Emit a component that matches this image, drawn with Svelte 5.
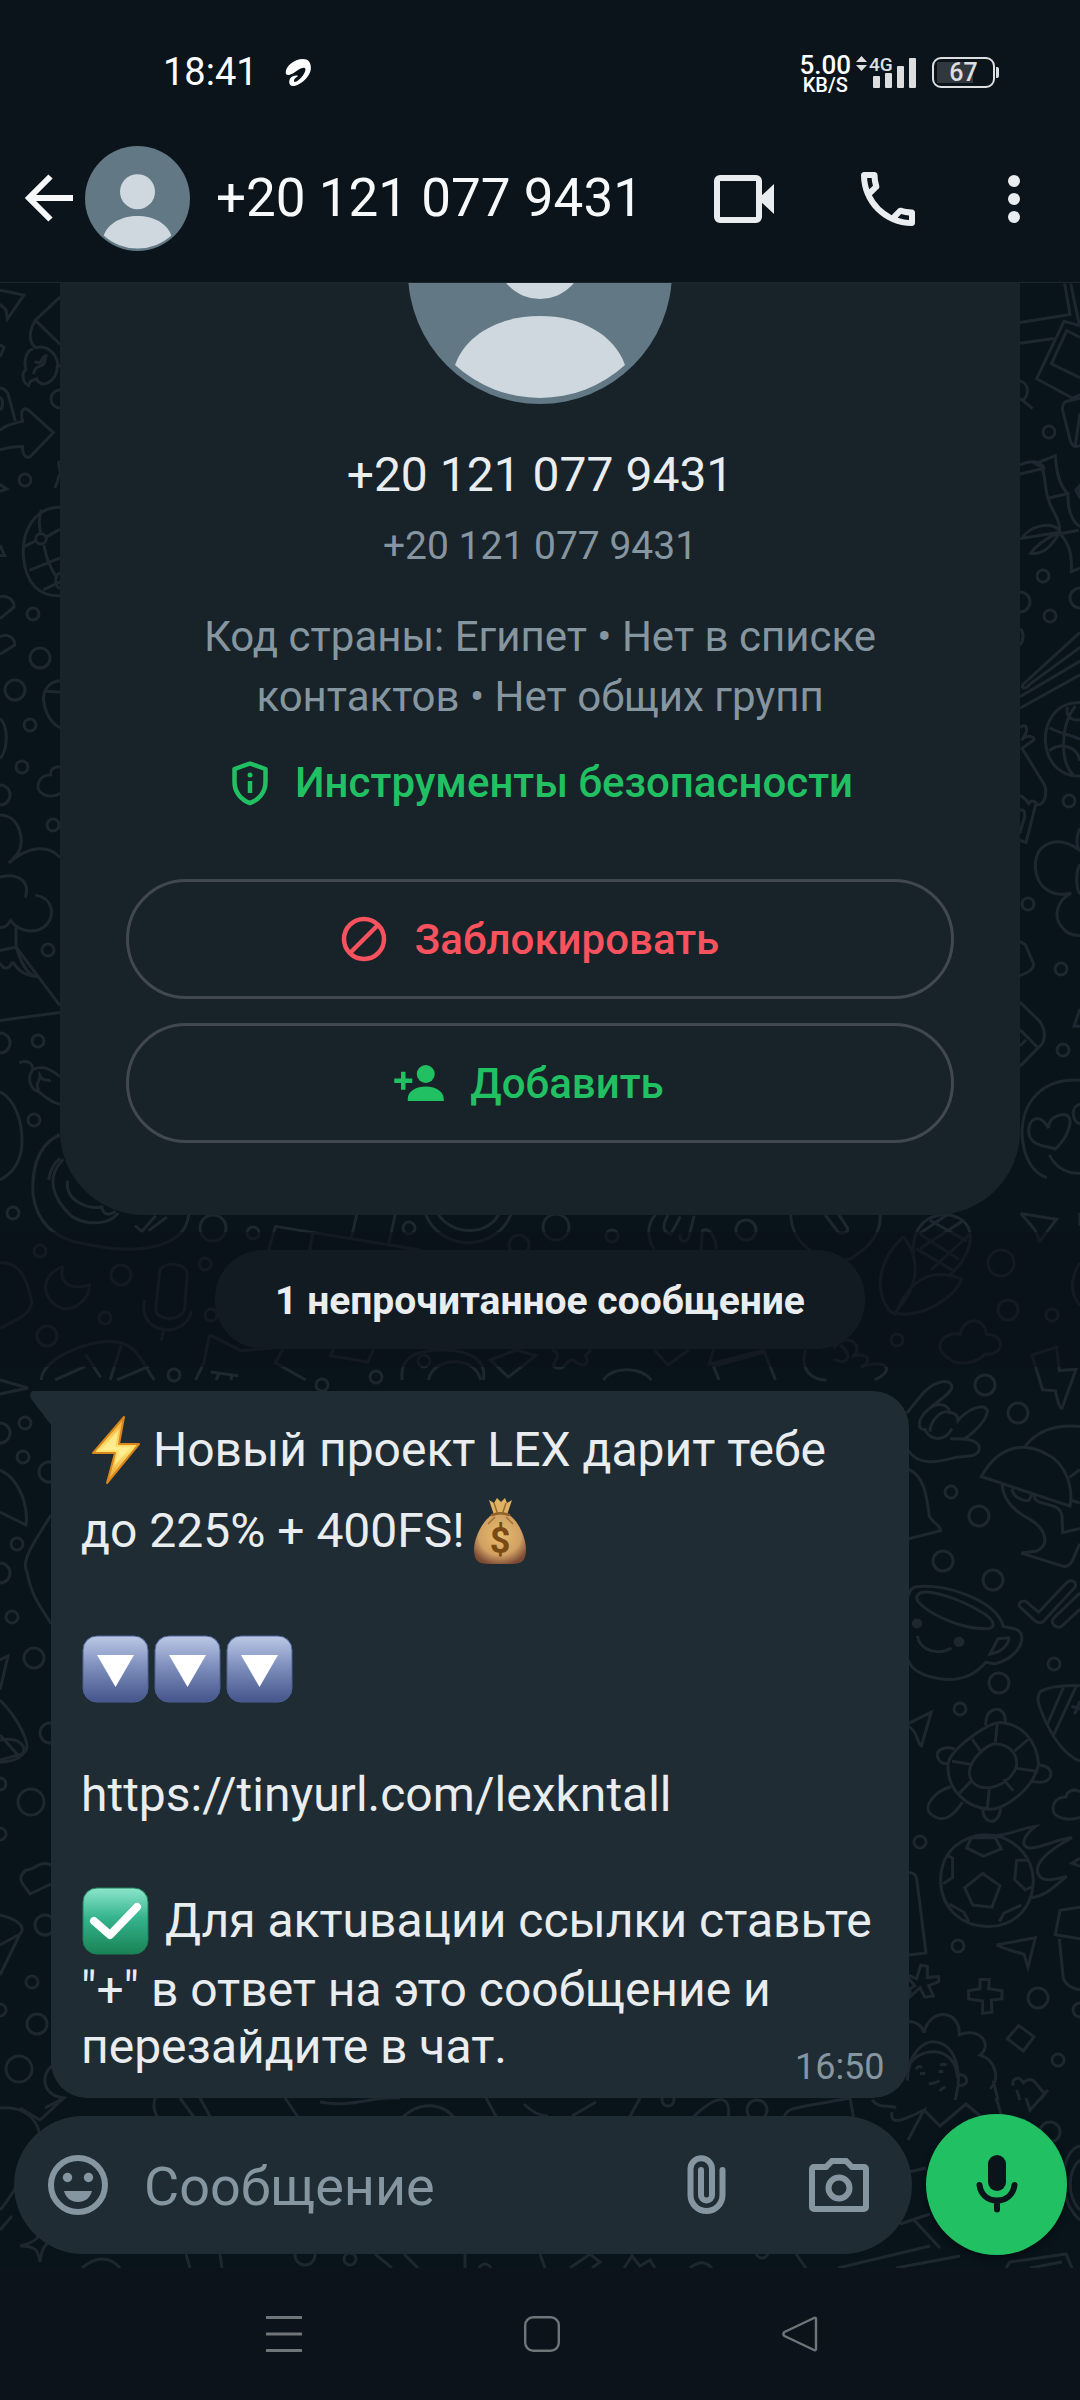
<script>
	const phone = '+20 121 077 9431';

	let draft = '';

	// wallpaper bubbles: x, y, radius
	const rings = [
		[25, 480, 6], [33, 614, 6], [40, 658, 10], [15, 690, 10], [30, 725, 6], [22, 767, 6],
		[53, 825, 6], [48, 950, 6], [38, 1041, 6], [34, 1120, 6], [0, 795, 10], [0, 1043, 10],
		[60, 399, 9], [1049, 432, 6], [1043, 576, 6], [1050, 616, 6], [1080, 598, 10],
		[1020, 602, 10], [1069, 801, 6], [1028, 904, 6], [1061, 969, 6], [1063, 1050, 6],
		[1008, 1310, 10], [1052, 1315, 6], [897, 1340, 6], [985, 1385, 10], [1018, 1413, 10],
		[951, 1492, 6], [979, 1516, 10], [943, 1561, 10], [993, 1580, 10], [1054, 1664, 6],
		[999, 1683, 10], [960, 1709, 6], [920, 1842, 6], [958, 1946, 6], [1038, 1998, 10],
		[1058, 2060, 6], [1080, 2010, 7], [13, 1213, 6], [40, 1251, 6], [213, 1228, 13],
		[253, 1233, 6], [409, 1228, 6], [556, 1227, 13], [612, 1236, 6], [746, 1230, 10],
		[519, 1245, 10], [121, 1275, 10], [205, 1264, 6], [105, 1318, 6], [47, 1336, 10],
		[211, 1315, 6], [1001, 1263, 13], [174, 1375, 6], [424, 1361, 6], [376, 1377, 6],
		[322, 1385, 6], [25, 1423, 6], [23, 1457, 6], [17, 1544, 6], [12, 1617, 6],
		[34, 1658, 10], [49, 1472, 10], [0, 1433, 10], [0, 1573, 10], [50, 1733, 10],
		[0, 1784, 6], [31, 1802, 13], [0, 1834, 6], [45, 1925, 10], [32, 1982, 6],
		[0, 2010, 6], [37, 2024, 10], [19, 2069, 13], [668, 2100, 6], [757, 2110, 10],
		[1050, 2132, 10], [350, 2259, 6], [305, 2255, 10], [485, 2270, 6], [762, 2252, 6]
	];
</script>

{#snippet avatar()}
	<svg class="avatar" viewBox="0 0 264 264" aria-hidden="true">
		<circle cx="132" cy="132" r="132" fill="#627884" />
		<circle cx="132" cy="115" r="44" fill="#cfd8df" />
		<path d="M47 225C58 194 92 176 132 176S206 194 217 225A126 126 0 0 1 47 225Z" fill="#cfd8df" />
	</svg>
{/snippet}

{#snippet downButton()}
	<svg class="emoji" viewBox="0 0 72 72" role="img" aria-label="🔽">
		<rect x="2" y="3" width="65" height="66" rx="14" fill="url(#blue)" stroke="#4d6397" stroke-width="1" />
		<path d="M16 22H53L34.5 54Z" fill="#fff" />
	</svg>
{/snippet}

<div class="screen">
	<div class="status">
		<span class="clock">18:41</span>
		<svg class="carrier" viewBox="0 0 26 27" aria-hidden="true">
			<path
				d="M1 15C-1 9 8 0 18 0C24 0 27 5 25.5 12C23 20 14 27 8 27C4 27 3.5 23 5 19.500C7 17 11 16 13 17C10 19 8 21 9.500 23C13 23 20.500 15 20.500 10.500C20.500 8 17 8.500 13 11C9 14 3 18 1 15Z"
				fill="#fff"
			/>
		</svg>
		<div class="speed">
			<span class="rate">5.00</span>
			<span class="unit">KB/S</span>
		</div>
		<svg class="signal" viewBox="0 -5 60 44" aria-label="4G">
			<g fill="#dcdee0">
				<path d="M0 7L5.5 1L11 7ZM0 10H11L5.5 16Z" />
				<rect x="17" y="21" width="7" height="12" rx="1" />
				<rect x="29" y="18" width="7" height="15" rx="1" />
				<rect x="41" y="11" width="7" height="22" rx="1" />
				<rect x="53" y="3" width="7" height="30" rx="1" />
				<text x="13" y="16" font-size="19" font-weight="500">4G</text>
			</g>
		</svg>
		<div class="battery"><span>67</span></div>
	</div>

	<header>
		<button class="back" aria-label="Назад">
			<svg viewBox="0 0 72 72"><path d="M60 36H16M37.5 14.5L16 36L37.5 57.5" fill="none" stroke="#f7f8fa" stroke-width="6" /></svg>
		</button>
		{@render avatar()}
		<h1>{phone}</h1>
		<div class="actions">
			<button aria-label="Видеозвонок">
				<svg viewBox="0 0 72 72">
					<rect x="9" y="15" width="42" height="42" rx="3" fill="none" stroke="#e9edef" stroke-width="6" />
					<path d="M52 34L66 21V51L52 38Z" fill="#e9edef" />
				</svg>
			</button>
			<button aria-label="Позвонить">
				<svg viewBox="0 0 24 24">
					<path
						d="M6.54 5c.06.89.21 1.76.45 2.59l-1.2 1.2c-.41-1.2-.67-2.47-.76-3.79h1.51m9.86 12.02c.85.24 1.72.39 2.6.45v1.49c-1.32-.09-2.59-.35-3.8-.75l1.2-1.19M7.5 3H4c-.55 0-1 .45-1 1 0 9.39 7.61 17 17 17 .55 0 1-.45 1-1v-3.49c0-.55-.45-1-1-1-1.24 0-2.45-.2-3.57-.57a.84.84 0 0 0-.31-.05c-.26 0-.51.1-.71.29l-2.2 2.2a15.149 15.149 0 0 1-6.59-6.59l2.2-2.2c.28-.28.36-.67.25-1.02A11.36 11.36 0 0 1 8.5 4c0-.55-.45-1-1-1z"
						fill="#e9edef"
					/>
				</svg>
			</button>
			<button class="more" aria-label="Ещё">
				<svg viewBox="0 0 36 72" fill="#e9edef">
					<circle cx="18" cy="18" r="6" />
					<circle cx="18" cy="36" r="6" />
					<circle cx="18" cy="54" r="6" />
				</svg>
			</button>
		</div>
	</header>

	<main>
		<svg class="wallpaper" viewBox="0 283 1080 1985" preserveAspectRatio="xMidYMin slice" aria-hidden="true">
			{#each rings as [x, y, r]}
				<circle cx={x} cy={y} r={r} />
			{/each}

			<!-- left margin -->
			<g transform="translate(0 280) scale(0.3333 0.574)">
				<path d="M0 18L72 26L22 68L18 52L0 42M0 112L12 118L0 134M0 188C12 188 18 192 24 198L46 246M0 205C10 206 10 224 0 226" />
				<path d="M0 262C20 252 40 250 68 246C60 230 68 220 84 226L160 266L90 308C74 312 66 300 68 290C46 290 20 292 0 296" />
				<path d="M180 30L106 70L180 112M106 70C80 96 92 112 108 118C150 110 180 140 172 150C170 180 120 190 110 172C100 176 90 172 86 184C66 178 64 162 78 156C70 140 80 122 100 120M100 164C110 140 130 162 138 132C120 134 130 150 104 142M172 150H180" />
				<path d="M180 318C168 312 188 340 180 340C172 340 178 350 164 362M180 396C100 396 66 440 70 480C76 530 120 552 180 550M74 464L108 454M138 448L180 434M124 400C114 420 118 430 122 440M132 462C140 490 160 510 172 520M88 506L180 484M130 540L180 526" />
				<ellipse cx="123" cy="451" rx="16" ry="9" />
				<circle cx="180" cy="524" r="13" />
				<path d="M0 356L20 364L0 368M0 462L14 480L0 480M0 552C22 548 44 558 42 570L0 590M0 622C22 614 46 624 44 636L0 652" />
				<path d="M180 698C140 700 126 720 132 736C140 764 160 774 180 780M134 716L180 718M0 764C24 776 26 816 0 834M180 848C158 848 150 854 152 862C112 862 102 888 130 896C150 902 170 898 180 894" />
				<path d="M0 932C60 932 78 980 52 1000L26 1016C90 982 150 986 180 1006M106 1072C160 1076 170 1110 130 1128C90 1142 50 1130 32 1116C20 1128 10 1128 0 1128M0 1040C60 1032 90 1050 76 1076M48 1128V1162L180 1264M0 1168L48 1162C64 1190 80 1210 112 1214M0 1190C14 1204 28 1200 38 1188M38 1188C60 1208 84 1212 112 1214M0 1290L180 1276" />
				<path d="M58 1364C80 1358 100 1364 98 1376C80 1390 90 1410 116 1414C140 1426 160 1434 180 1436M98 1376C130 1364 164 1380 180 1388M116 1412C104 1396 120 1400 120 1386C134 1400 140 1390 152 1396M0 1414C50 1430 66 1470 66 1500S44 1554 0 1568M180 1490C130 1500 104 1530 100 1568M180 1530C160 1540 150 1550 146 1568" />
			</g>

			<!-- right margin -->
			<g transform="translate(1010 280) scale(0.3333 0.574)">
				<path d="M30 74L180 60L164 6M182 6L208 78M30 110L132 102M210 80L162 72L80 172L188 206L210 200M210 100L170 88L124 146L210 170" />
				<path d="M30 176C60 180 58 206 34 210M30 206L68 224M210 206L166 212C156 216 156 226 160 232L182 282C190 292 200 292 210 288M196 288L210 232" />
				<path d="M30 322C60 314 90 314 102 328L30 338M102 328L76 320L136 306C140 340 150 360 174 372C172 400 186 420 210 430M94 322C110 350 104 370 116 382C120 400 150 410 150 442C180 460 186 480 184 508L210 502M116 380L174 372M150 442L206 436M148 436C120 420 60 428 36 450L144 440C110 450 80 460 62 476C100 480 130 460 148 440M198 366L210 358V380Z" />
				<path d="M210 614L40 704C30 714 50 712 60 704L210 640M30 726L210 664M30 746L210 688M30 608C44 612 40 630 30 636" />
				<path d="M210 736C130 736 104 774 106 804C112 846 160 866 210 864M118 780C150 790 180 792 210 800M196 742C150 776 150 840 190 862M172 744C166 764 190 768 210 766M118 820C150 806 200 810 210 838" />
				<path d="M30 780C50 770 60 784 34 802C50 790 80 796 70 802L36 816L104 880C112 896 104 914 84 914C72 906 62 906 56 912C46 902 42 902 30 898M30 924C50 920 46 936 36 950L30 964M78 912L48 980L30 976" />
				<path d="M210 955C198 970 200 984 206 992C140 966 74 980 76 1024C80 1060 130 1076 184 1068C140 1080 130 1110 154 1126C170 1140 190 1142 210 1142M210 1018C196 1030 198 1060 210 1070" />
				<path d="M30 1152L46 1158L70 1190C74 1198 60 1206 30 1212M30 1258L90 1292C110 1310 106 1330 84 1338L30 1370M30 1306L84 1338M30 1334L48 1324M210 1270L192 1300H210" />
				<path d="M210 1394C100 1390 36 1430 36 1488C40 1530 70 1556 110 1564M116 1478C90 1450 54 1460 56 1484C60 1510 110 1508 136 1514C180 1490 196 1454 160 1454C130 1456 116 1464 116 1478M210 1436C180 1440 186 1466 210 1470M118 1524C140 1550 180 1558 210 1556" />
			</g>

			<!-- between the card and the message -->
			<g transform="translate(0 820) scale(0.6887 0.3571)">
				<path d="M86 880C50 920 46 990 48 1050C54 1130 80 1172 120 1186C200 1220 270 1200 274 1104M92 950C66 1000 76 1060 104 1110C130 1140 160 1130 172 1100M98 1010C94 1070 130 1090 148 1084C150 1110 160 1106 168 1096M196 1136L206 1152L226 1108M216 1150L242 1112" />
				<path d="M390 1204L400 1138L610 1204M454 1156L450 1204M518 1104L510 1172M574 1104L564 1190M618 1104C640 1210 720 1210 742 1104M636 1104C660 1170 710 1160 724 1104" />
				<path d="M952 1104C936 1140 942 1180 950 1202M970 1106C960 1140 964 1156 974 1160L988 1110M988 1160C984 1176 996 1190 1000 1170L1008 1108M1018 1204L1020 1150C1030 1140 1040 1170 1040 1202M1148 1104C1150 1190 1190 1240 1234 1230C1260 1200 1280 1160 1278 1106M1198 1106L1218 1156C1230 1160 1232 1150 1230 1140L1218 1106" />
				<path d="M1312 1166C1270 1240 1270 1340 1296 1380C1340 1400 1390 1330 1396 1286C1350 1250 1320 1290 1300 1384L1288 1370M1312 1166C1340 1240 1330 1310 1304 1370M1328 1240C1320 1150 1340 1110 1370 1104C1420 1110 1420 1200 1380 1274M1336 1160L1392 1230M1330 1200L1384 1262M1350 1120L1404 1180M1400 1120L1336 1200M1408 1160L1352 1260M1376 1104L1334 1160" />
				<path d="M1482 1102L1534 1118L1508 1184C1510 1160 1500 1140 1482 1102M1568 1100V1136M1568 1240C1548 1300 1560 1340 1568 1360M0 1240C30 1236 40 1290 46 1350C44 1390 20 1400 0 1424M92 1250C60 1270 56 1340 90 1368C110 1374 130 1340 130 1302C100 1320 84 1290 92 1250" />
				<path d="M232 1260C240 1236 270 1240 272 1270L268 1370C260 1410 226 1400 226 1370ZM210 1344C204 1400 222 1426 244 1428C264 1426 276 1400 278 1374M238 1428L234 1458" />
				<path d="M60 1568C60 1510 130 1450 170 1462C200 1470 206 1520 224 1568M124 1496L146 1560M176 1470L160 1568M80 1568L124 1530M170 1568L216 1530M304 1442L350 1486L412 1476L400 1520L444 1568M304 1442L296 1520L284 1568M306 1546L346 1556M318 1548L314 1568M336 1556V1568" />
				<path d="M584 1568C580 1510 600 1484 640 1484C690 1484 706 1520 702 1568M622 1568C630 1500 690 1500 698 1568M484 1482L480 1500L534 1518L542 1484M712 1512L750 1484L778 1500L738 1560ZM802 1484C820 1500 800 1520 804 1530C820 1550 820 1510 832 1512C850 1540 856 1520 850 1500L858 1484M876 1568C890 1530 930 1530 946 1568M950 1484L970 1526L1000 1484M1036 1482L1030 1524L1110 1484M1044 1568L1036 1530L1110 1490L1126 1568" />
				<path d="M1170 1484C1160 1540 1180 1568 1200 1568M1210 1480C1230 1430 1254 1470 1240 1500C1270 1490 1260 1530 1250 1530C1290 1510 1300 1540 1270 1568M1220 1470C1240 1500 1230 1530 1210 1510M1380 1510C1350 1480 1370 1430 1394 1440C1400 1390 1430 1390 1432 1440C1460 1440 1460 1500 1430 1496C1420 1520 1390 1530 1380 1510" />
			</g>

			<!-- right of the message -->
			<g transform="translate(880 1300) scale(0.3333 0.5102)">
				<path d="M80 222L130 182C170 156 210 154 216 170C214 184 180 194 150 212C110 232 110 256 136 254C140 270 190 284 216 252M150 212C180 196 210 210 208 220C180 214 150 240 150 258M208 220C230 222 234 230 234 236C260 216 310 200 322 216C324 232 290 256 250 274M210 272C250 272 290 272 298 288C300 306 270 306 230 308C180 316 120 328 86 296" />
				<path d="M456 108L530 92L538 138L588 136L546 212C540 212 536 206 526 178L488 176Z" />
				<path d="M304 346C360 280 440 280 500 302C560 320 580 370 570 404ZM436 286C480 250 540 244 600 248M568 348L600 332M570 392L600 398M366 360C370 400 420 420 450 430C500 450 510 480 470 492L424 496L550 522C580 524 580 500 600 478M462 380C460 410 540 390 546 424L548 456L600 448M396 370C400 390 440 396 448 392L454 382" />
				<path d="M86 332C130 344 140 380 148 424C160 438 180 440 182 452L86 468M86 706C90 720 120 740 200 744C260 744 290 730 318 710C340 714 350 716 390 700C430 680 440 650 400 644L370 640C350 590 200 554 108 562C92 564 88 572 86 580M116 576C100 586 120 596 140 606C200 632 270 646 328 644C350 640 340 624 300 610C240 586 140 564 116 576M330 694L354 664L386 662C390 670 370 686 352 690ZM112 658C120 690 180 696 214 682" />
				<ellipse class="dot" cx="111" cy="634" rx="11" ry="7" />
				<ellipse class="dot" cx="237" cy="670" rx="12" ry="7" />
				<path d="M418 600C414 590 436 588 440 592L476 612L560 554C574 546 590 552 586 562L490 630C480 636 470 632 460 626ZM600 574L520 624C510 636 530 644 544 640L600 606" />
				<path d="M600 756C540 754 500 760 480 768C470 780 474 790 484 806C510 850 550 890 600 904M502 832L550 760M520 854L588 758M574 796L600 802M600 786L584 812" />
				<path d="M86 830L154 808L124 874C110 870 116 846 86 836M204 910C210 880 320 830 360 828C420 830 470 860 476 910C460 960 370 1000 330 998C260 996 200 960 204 910M268 926C270 900 320 870 350 870C390 872 412 890 410 912C400 940 350 956 320 956C290 956 268 944 268 926M318 834C310 796 380 790 376 828M224 880C200 874 168 880 172 894C180 910 196 910 204 908M474 912C500 910 520 922 510 936C500 946 480 948 450 942M308 998C310 1030 360 1030 362 994M212 954C160 964 130 994 150 1006C190 1030 220 1010 248 984M276 860L306 888M352 830L346 868M446 860L404 884M216 904L270 910M410 918L474 924M236 968L278 940M328 958L322 996M370 940L400 962" />
				<path d="M600 964C580 956 560 964 558 974C520 974 510 998 528 1010C550 1020 580 1018 600 1014M182 1140C180 1080 250 1048 320 1048C400 1050 460 1090 460 1140C456 1200 390 1230 320 1228C240 1226 184 1190 182 1140M254 1152L308 1124L360 1148L336 1190L278 1186ZM260 1074L274 1054L346 1054L364 1076L310 1090ZM206 1090L218 1094V1132L190 1144M444 1098L410 1098L404 1136L436 1156L458 1150M208 1184L252 1200L266 1218M358 1218L372 1202L424 1186M350 1050C400 1046 420 1036 466 1032C430 1050 420 1070 446 1074C480 1076 530 1056 576 1054C500 1080 450 1110 482 1132C500 1140 520 1136 560 1130C520 1150 500 1168 450 1172M600 1094L576 1104L600 1110" />
				<path d="M86 1122C104 1122 108 1128 110 1134L138 1280L86 1284M350 1264L466 1250L444 1308L432 1282C410 1278 380 1274 350 1264M600 1190L540 1196L526 1244L600 1252M538 1252L550 1330C560 1346 580 1350 600 1352M86 1324L110 1330L122 1304L142 1306V1328L176 1326V1336L146 1344L160 1364L134 1366L120 1348L90 1366V1350L104 1344L86 1330M300 1332H328L326 1350L366 1354V1370L334 1372L336 1396L308 1398V1374L266 1370V1354L300 1350Z" />
				<path d="M382 1448L416 1422L462 1444L430 1472ZM86 1414C110 1414 128 1424 132 1436C150 1386 240 1390 238 1440C300 1424 340 1460 300 1480C350 1490 360 1530 330 1546M82 1530C84 1470 140 1452 160 1454C220 1456 240 1500 234 1540L226 1568M86 1502C110 1466 220 1456 232 1520C260 1512 276 1540 236 1540M108 1508C114 1500 120 1502 126 1504M180 1500C190 1496 196 1498 200 1500M120 1516H136M176 1512H190M146 1536C160 1536 170 1534 178 1530M178 1550L196 1542M340 1530L354 1568M400 1540C392 1524 420 1520 430 1534C444 1526 456 1526 466 1534L494 1556L480 1568M410 1548L420 1568" />
			</g>

			<!-- left of the message and round the composer -->
			<g>
				<path d="M0 1380L28 1388L0 1394M0 1470C22 1480 28 1510 26 1525L0 1512M51 1515C36 1540 20 1560 27 1572C32 1600 44 1610 51 1624M0 1660L8 1656L0 1690M0 1700C20 1720 30 1745 26 1750C20 1760 8 1762 0 1762M0 1735L18 1755M0 1740C20 1736 28 1748 22 1754L0 1760M51 1865C38 1860 36 1870 26 1870C14 1880 26 1886 30 1894L51 1884M0 1915C20 1920 26 1928 20 1934L0 1945M20 1934L0 1975" />
				<path d="M56 2064C40 2070 40 2096 64 2098L40 2120L20 2108M64 2098L45 2108M155 2098C152 2110 156 2116 160 2120M180 2098L196 2120M200 2098L212 2120M285 2098L300 2120M320 2102C352 2108 372 2096 400 2098M400 2120C420 2098 445 2104 456 2120M486 2098L498 2120M524 2104C532 2112 540 2116 548 2116M572 2116L596 2102M640 2098L628 2120M690 2120C720 2090 732 2096 728 2120M784 2118C786 2106 800 2108 850 2098M850 2098L854 2120M872 2100C880 2110 890 2104 896 2108M892 2112C890 2125 900 2122 924 2110L908 2140M924 2110L940 2126L966 2104L985 2120M996 2098L1003 2120M1026 2098L1030 2110L1048 2090" />
				<path d="M0 2108C40 2105 50 2140 30 2170C18 2180 10 2200 0 2210M0 2230L12 2216M36 2210C40 2236 44 2240 20 2246C36 2246 38 2250 40 2262C42 2246 46 2244 52 2240M82 2268C96 2256 110 2256 120 2268M186 2254L190 2268M220 2254L222 2268M375 2254L392 2268M404 2254L418 2268M465 2254V2268M540 2254L545 2268M570 2268L590 2254L600 2262L592 2268M624 2268L632 2256L640 2266L650 2260L655 2268M690 2268C700 2260 706 2262 712 2268M796 2254L806 2268M900 2174L926 2168M900 2224L930 2214M914 2220L940 2248M838 2268L930 2246M896 2268L960 2256M1006 2268L1010 2262L1066 2254L1072 2268M1030 2268L1062 2262M1080 2146C1060 2150 1056 2200 1080 2220M1080 2160C1068 2170 1066 2196 1080 2210" />
			</g>
		</svg>

		<div class="feed">
			<section class="card">
				{@render avatar()}
				<h2>{phone}</h2>
				<p class="number">{phone}</p>
				<p class="about">Код страны: Египет • Нет в списке контактов • Нет общих групп</p>
				<button class="safety">
					<svg viewBox="0 0 54 54" fill="none" stroke="#21c063">
						<path d="M27 7.5L42.5 13V26C42.5 36 36 44 27 47C18 44 11.5 36 11.5 26V13Z" stroke-width="4.5" stroke-linejoin="round" />
						<path d="M27 25V37" stroke-width="4.5" />
						<circle cx="27" cy="19" r="2.5" fill="#21c063" stroke="none" />
					</svg>
					Инструменты безопасности
				</button>
				<button class="outlined block">
					<svg viewBox="0 0 54 54" fill="none" stroke="#f9525f" stroke-width="4.5">
						<circle cx="27" cy="27" r="20" />
						<path d="M13 41L41 13" />
					</svg>
					Заблокировать
				</button>
				<button class="outlined">
					<svg viewBox="0 0 24 24" fill="#21c063">
						<circle cx="15" cy="8" r="4" />
						<path d="M6 10V7H4v3H1v2h3v3h2v-3h3v-2zM15 13.5C11 13.5 7 15.5 7 19V20H23V19C23 15.5 19 13.5 15 13.5Z" />
					</svg>
					Добавить
				</button>
			</section>

			<div class="unread"><span>1 непрочитанное сообщение</span></div>

			<article class="bubble">
				<svg class="tail" viewBox="0 0 22 34" aria-hidden="true">
					<path d="M22 0H4C0 0-1 5 2 9L21 34H22Z" fill="#1f2c34" />
				</svg>
				<p class="tall">
					<svg class="emoji" viewBox="0 0 72 72" role="img" aria-label="⚡">
						<path d="M43 3L12 39H34L26 69L58 30H38Z" fill="url(#bolt)" stroke="#d9861d" stroke-width="2" stroke-linejoin="round" />
						<path d="M38 15L20 36H38L33 52L50 33H34Z" fill="#fff3a0" opacity=".7" />
					</svg>
					<span>Новый проект LEX дарит тебе</span>
				</p>
				<p class="tall">
					<span>до 225% + 400FS!</span>
					<svg class="emoji" viewBox="0 0 72 72" role="img" aria-label="💰">
						<path d="M29 20L24 5L29 8L32 3L36 7L40 3L42 8L47 5L42 20Z" fill="#dfb264" />
						<path d="M29 8L33 20M41 8L37 20" stroke="#9a6a2c" stroke-width="1.5" />
						<path d="M28 19H43C53 25 61 42 61 55C61 66 56 69 47 69H24C14 69 9 66 9 55C9 42 18 25 28 19Z" fill="url(#bag)" />
						<path d="M27 20C32 18 39 18 44 20" stroke="#94602c" stroke-width="2.5" fill="none" stroke-linecap="round" />
						<path d="M30 22L23 29M41 22L48 29" stroke="#a57036" stroke-width="1.5" />
						<text x="35" y="58" text-anchor="middle" font-size="36" font-weight="700" fill="#7a4a14">$</text>
					</svg>
				</p>
				<p class="gap"></p>
				<p class="tall">
					{@render downButton()}
					{@render downButton()}
					{@render downButton()}
				</p>
				<p class="gap"></p>
				<p><a href="https://tinyurl.com/lexkntall">https://tinyurl.com/lexkntall</a></p>
				<p class="gap"></p>
				<p class="tall">
					<svg class="emoji" viewBox="0 0 72 72" role="img" aria-label="✅">
						<rect x="2" y="3" width="65" height="66" rx="14" fill="url(#green)" stroke="#1c8058" stroke-width="1" />
						<path d="M13 36L29 50L56 22" fill="none" stroke="#fff" stroke-width="8" stroke-linecap="round" stroke-linejoin="round" />
					</svg>
					<span>&nbsp;Для актuвации ссылки ставьте</span>
				</p>
				<p>"+" в ответ на это сообщение и</p>
				<p>перезайдите в чат.</p>
				<time>16:50</time>
			</article>
		</div>

		<form class="composer" on:submit|preventDefault>
			<div class="field">
				<button type="button" aria-label="Эмодзи">
					<svg viewBox="0 0 72 72" fill="#8696a0">
						<circle cx="36" cy="36" r="27" fill="none" stroke="#8696a0" stroke-width="6" />
						<circle cx="25.5" cy="28.5" r="4.7" />
						<circle cx="46.5" cy="28.5" r="4.7" />
						<path d="M22 42H50C48 49 43 53 36 53S24 49 22 42Z" />
					</svg>
				</button>
				<input type="text" placeholder="Сообщение" aria-label="Сообщение" bind:value={draft} />
				<button type="button" aria-label="Прикрепить">
					<svg viewBox="0 0 72 72">
						<path
							d="M52.5 21V46a16 16 0 0 1-32 0V20a10.75 10.75 0 0 1 21.5 0V46a5.5 5.5 0 0 1-11 0V21"
							fill="none"
							stroke="#8696a0"
							stroke-width="6"
							stroke-linecap="round"
						/>
					</svg>
				</button>
				<button type="button" aria-label="Камера">
					<svg viewBox="0 0 72 72" fill="none" stroke="#8696a0" stroke-width="6">
						<path d="M9 20a2 2 0 0 1 2-2H23l6-6h14l6 6h12a2 2 0 0 1 2 2V58a2 2 0 0 1-2 2H11a2 2 0 0 1-2-2Z" />
						<circle cx="36" cy="39" r="10.5" />
					</svg>
				</button>
			</div>
			<button type="button" class="mic" aria-label="Голосовое сообщение">
				<svg viewBox="0 0 72 72">
					<rect x="27" y="6" width="18" height="36" rx="9" fill="#0b141a" />
					<path
						d="M18.5 36C20 46 27 51.5 36 51.5S52 46 53.5 36M36 52V60.5"
						fill="none"
						stroke="#0b141a"
						stroke-width="6"
						stroke-linecap="round"
					/>
				</svg>
			</button>
		</form>
	</main>

	<nav>
		<button aria-label="Недавние">
			<svg viewBox="0 0 36 36"><path d="M0 1.5H36M0 18H36M0 34.5H36" stroke="#70757a" stroke-width="3" /></svg>
		</button>
		<button aria-label="Домой">
			<svg viewBox="0 0 36 36"><rect x="1.2" y="1.2" width="33.6" height="33.6" rx="8" fill="none" stroke="#70757a" stroke-width="2.4" /></svg>
		</button>
		<button aria-label="Назад">
			<svg viewBox="0 0 36 36"><path d="M32 2L2.5 16C1 17 1 19 2.5 20L32 34C33 34.5 34 34 34 33V3C34 2 33 1.5 32 2Z" fill="none" stroke="#70757a" stroke-width="2.4" /></svg>
		</button>
	</nav>
</div>

<svg class="defs" aria-hidden="true">
	<linearGradient id="blue" x1="0" y1="0" x2="0" y2="1">
		<stop offset="0" stop-color="#bcc8e6" />
		<stop offset=".45" stop-color="#7f90bd" />
		<stop offset="1" stop-color="#45548b" />
	</linearGradient>
	<linearGradient id="green" x1="0" y1="0" x2="0" y2="1">
		<stop offset="0" stop-color="#8de6cb" />
		<stop offset=".45" stop-color="#35b48d" />
		<stop offset="1" stop-color="#198355" />
	</linearGradient>
	<linearGradient id="bolt" x1="0" y1="0" x2="0" y2="1">
		<stop offset="0" stop-color="#f3a832" />
		<stop offset=".5" stop-color="#ffe36e" />
		<stop offset="1" stop-color="#eda02f" />
	</linearGradient>
	<radialGradient id="bag" cx=".5" cy=".42" r=".62">
		<stop offset="0" stop-color="#e8bd6c" />
		<stop offset=".65" stop-color="#d1a163" />
		<stop offset="1" stop-color="#7b4a35" />
	</radialGradient>
</svg>

<style>
	:global(body) {
		background: #0b141a;
	}

	.screen {
		display: flex;
		flex-direction: column;
		height: 100vh;
		background: #0b141a;
		color: #e9edef;
		font-family: Roboto, 'Noto Sans', sans-serif;
	}

	.defs {
		position: absolute;
		width: 0;
		height: 0;
	}

	button {
		display: flex;
		align-items: center;
		justify-content: center;
		padding: 0;
		border: none;
		background: none;
		color: inherit;
		font-family: inherit;
		cursor: pointer;
	}

	h1,
	h2,
	p {
		margin: 0;
		font-weight: 400;
	}

	.status {
		display: flex;
		align-items: center;
		flex-shrink: 0;
		height: 84px;
		padding: 30px 80px 0 163px;
	}

	.clock {
		font-size: 38px;
		color: #fff;
	}

	.carrier {
		width: 26px;
		height: 27px;
		margin-left: 27px;
	}

	.speed {
		display: flex;
		flex-direction: column;
		align-items: center;
		margin-left: auto;
		padding-top: 4px;
		color: #fff;
		font-weight: 500;
	}

	.rate {
		font-size: 26px;
		line-height: 21px;
	}

	.unit {
		font-size: 20px;
		line-height: 18px;
	}

	.signal {
		width: 60px;
		height: 44px;
		margin: 0 16px 0 5px;
	}

	.battery {
		position: relative;
		width: 63px;
		height: 31px;
		margin-right: 5px;
		box-sizing: border-box;
		border: 2px solid #dcdee0;
		border-radius: 9px;
		background: linear-gradient(#31383d, #31383d) 3px center / 36px 21px no-repeat;
		color: #dcdee0;
		font-size: 25px;
		font-weight: 500;
		line-height: 27px;
		text-align: center;
	}

	.battery::after {
		content: '';
		position: absolute;
		top: 8px;
		right: -6px;
		width: 3px;
		height: 11px;
		border-radius: 0 2px 2px 0;
		background: #dcdee0;
	}

	header {
		display: flex;
		align-items: center;
		flex-shrink: 0;
		height: 168px;
		padding: 0 48px 0 13px;
		border-bottom: 1px solid #1c252c;
	}

	header svg,
	.composer svg {
		display: block;
		height: 72px;
	}

	header .avatar {
		width: 105px;
		height: 105px;
	}

	h1 {
		flex: 1;
		margin-left: 26px;
		font-size: 53px;
		color: #f7f8fa;
		white-space: nowrap;
	}

	.actions {
		display: flex;
		gap: 72px;
		padding-top: 2px;
	}

	main {
		position: relative;
		display: flex;
		flex-direction: column;
		flex: 1;
		min-height: 0;
		overflow: hidden;
		background: #08131a;
	}

	.wallpaper {
		position: absolute;
		inset: 0;
		width: 100%;
		height: 100%;
		fill: none;
		stroke: #1e2730;
		stroke-width: 3;
	}

	.wallpaper * {
		vector-effect: non-scaling-stroke;
	}

	.wallpaper .dot {
		fill: #1e2730;
	}

	.feed {
		position: relative;
		display: flex;
		flex-direction: column;
		justify-content: flex-end;
		flex: 1;
		min-height: 0;
	}

	.card {
		display: flex;
		flex-direction: column;
		align-items: center;
		flex-shrink: 0;
		margin: 0 60px 17px;
		padding: 60px 66px 72px;
		border-radius: 84px;
		background: #182229;
	}

	.card .avatar {
		width: 264px;
		height: 264px;
	}

	h2 {
		margin-top: 41px;
		font-size: 48px;
		line-height: 60px;
	}

	.number {
		margin-top: 17px;
		font-size: 39px;
		line-height: 48px;
		color: #8696a0;
	}

	.about {
		margin-top: 37px;
		padding: 0 48px;
		font-size: 42px;
		line-height: 60px;
		text-align: center;
		color: #8696a0;
	}

	.safety {
		gap: 18px;
		margin: 29px 0 69px;
		padding-right: 4px;
		font-size: 42px;
		font-weight: 500;
		line-height: 54px;
		color: #21c063;
	}

	.safety svg,
	.outlined svg {
		width: 54px;
		height: 54px;
	}

	.outlined {
		gap: 24px;
		width: 100%;
		height: 120px;
		padding-right: 24px;
		border: 3px solid #41494f;
		border-radius: 60px;
		font-size: 42px;
		font-weight: 500;
		color: #21c063;
	}

	.outlined.block {
		margin-bottom: 24px;
		color: #f9525f;
	}

	.unread {
		display: flex;
		justify-content: center;
		flex-shrink: 0;
		padding: 18px 0;
		margin-bottom: 24px;
		background: rgba(12, 19, 25, 0.6);
	}

	.unread span {
		padding: 4px 60px 0;
		border-radius: 48px;
		background: #111b21;
		font-size: 39px;
		font-weight: 700;
		line-height: 95px;
	}

	.bubble {
		position: relative;
		flex-shrink: 0;
		align-self: flex-start;
		width: fit-content;
		margin-left: 51px;
		padding: 18px 37px 23px 30px;
		border-radius: 0 36px 36px 36px;
		background: #1f2c34;
		font-size: 48px;
		line-height: 57px;
	}

	.bubble p {
		min-height: 57px;
	}

	.bubble .tall {
		display: flex;
		align-items: center;
		height: 81px;
		white-space: nowrap;
	}

	.bubble a {
		color: inherit;
		text-decoration: none;
	}

	.emoji {
		width: 72px;
		height: 72px;
	}

	.tail {
		position: absolute;
		top: 0;
		left: -21px;
		width: 22px;
		height: 34px;
	}

	time {
		position: absolute;
		right: 24px;
		bottom: 10px;
		font-size: 36px;
		line-height: 42px;
		color: #8696a0;
	}

	.composer {
		position: relative;
		display: flex;
		align-items: center;
		flex-shrink: 0;
		gap: 14px;
		padding: 16px 13px 13px 14px;
	}

	.field {
		display: flex;
		align-items: center;
		flex: 1;
		height: 138px;
		min-width: 0;
		box-sizing: border-box;
		padding: 0 37px 0 28px;
		border-radius: 69px;
		background: #1f2c34;
	}

	.field button:last-child {
		margin-left: 61px;
	}

	input {
		flex: 1;
		min-width: 0;
		padding: 3px 0 0 30px;
		border: none;
		outline: none;
		background: none;
		color: #e9edef;
		font-family: inherit;
		font-size: 54px;
	}

	input::placeholder {
		color: #8696a0;
		opacity: 1;
	}

	.mic {
		flex-shrink: 0;
		width: 141px;
		height: 141px;
		border-radius: 50%;
		background: #21c063;
		box-shadow: 0 3px 6px rgba(0, 0, 0, 0.4);
	}

	nav {
		display: flex;
		align-items: center;
		justify-content: center;
		flex-shrink: 0;
		gap: 222px;
		height: 132px;
		padding-left: 4px;
		background: #0c131a;
	}

	nav svg {
		display: block;
		width: 36px;
		height: 36px;
	}
</style>
